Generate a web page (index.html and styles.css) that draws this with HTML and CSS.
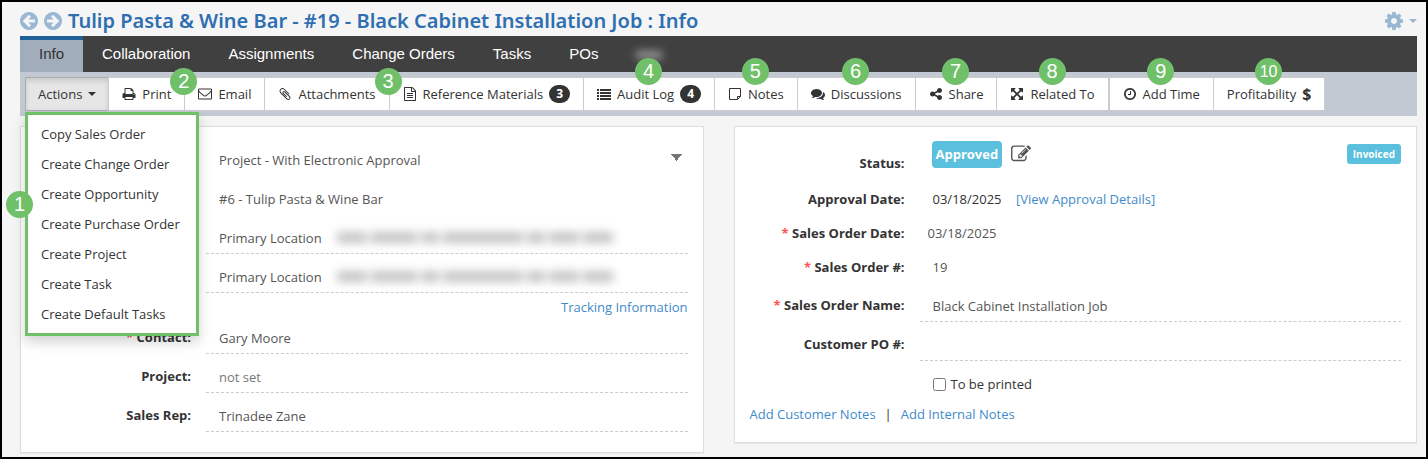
FILE: index.html
```
<!DOCTYPE html>
<html lang="en">

<head>
    <meta charset="UTF-8">
    <meta name="viewport" content="width=device-width, initial-scale=1.0">
    <title>Sales Order : Info</title>
    <link rel="stylesheet" href="styles.css">
</head>

<body>
    <header class="page-header">
        <button class="icon-btn" aria-label="Previous">
            <svg class="icon-nav" viewBox="128 128 1536 1536"><path d="M1408 960v-128q0-26-19-45t-45-19h-502l189-189q19-19 19-45t-19-45l-91-91q-18-18-45-18t-45 18l-362 362-91 91q-18 18-18 45t18 45l91 91 362 362q18 18 45 18t45-18l91-91q18-18 18-45t-18-45l-189-189h502q26 0 45-19t19-45zm256-64q0 209-103 385.5t-279.5 279.5-385.5 103-385.5-103-279.5-279.5-103-385.5 103-385.5 279.5-279.5 385.5-103 385.5 103 279.5 279.5 103 385.5z"/></svg>
        </button>
        <button class="icon-btn" aria-label="Next">
            <svg class="icon-nav flip" viewBox="128 128 1536 1536"><path d="M1408 960v-128q0-26-19-45t-45-19h-502l189-189q19-19 19-45t-19-45l-91-91q-18-18-45-18t-45 18l-362 362-91 91q-18 18-18 45t18 45l91 91 362 362q18 18 45 18t45-18l91-91q18-18 18-45t-18-45l-189-189h502q26 0 45-19t19-45zm256-64q0 209-103 385.5t-279.5 279.5-385.5 103-385.5-103-279.5-279.5-103-385.5 103-385.5 279.5-279.5 385.5-103 385.5 103 279.5 279.5 103 385.5z"/></svg>
        </button>
        <h1>Tulip Pasta &amp; Wine Bar - #19 - Black Cabinet Installation Job : Info</h1>
        <button class="icon-btn settings" aria-label="Settings">
            <svg class="icon-nav" viewBox="128 128 1536 1536"><path d="M1152 896q0-106-75-181t-181-75-181 75-75 181 75 181 181 75 181-75 75-181zm512-109v222q0 12-8 23t-20 13l-185 28q-19 54-39 91 35 50 107 138 10 12 10 25t-9 23q-27 37-99 108t-94 71q-12 0-26-9l-138-108q-44 23-91 38-16 136-29 186-7 28-36 28h-222q-14 0-24.5-8.5t-11.5-21.5l-28-184q-49-16-90-37l-141 107q-10 9-25 9-14 0-25-11-126-114-165-168-7-10-7-23 0-12 8-23 15-21 51-66.5t54-70.5q-27-50-41-99l-183-27q-13-2-21-12.5t-8-23.5v-222q0-12 8-23t19-13l186-28q14-46 39-92-40-57-107-138-10-12-10-24 0-10 9-23 26-36 98.5-107.5t94.5-71.5q13 0 26 10l138 107q44-23 91-38 16-136 29-186 7-28 36-28h222q14 0 24.5 8.5t11.5 21.5l28 184q49 16 90 37l142-107q9-9 24-9 13 0 25 10 129 119 165 170 7 8 7 22 0 12-8 23-15 21-51 66.5t-54 70.5q26 50 41 98l183 28q13 2 21 12.5t8 23.5z"/></svg>
            <span class="caret"></span>
        </button>
    </header>

    <nav class="tabs">
        <a href="#" class="active">Info</a>
        <a href="#">Collaboration</a>
        <a href="#">Assignments</a>
        <a href="#">Change Orders</a>
        <a href="#">Tasks</a>
        <a href="#">POs</a>
        <a href="#" aria-label="More"><span class="tab-blur"></span></a>
    </nav>

    <div class="toolbar">
        <div class="tool">
            <button class="btn open">Actions <span class="caret"></span></button>
            <div class="menu">
                <a href="#">Copy Sales Order</a>
                <a href="#">Create Change Order</a>
                <a href="#">Create Opportunity</a>
                <a href="#">Create Purchase Order</a>
                <a href="#">Create Project</a>
                <a href="#">Create Task</a>
                <a href="#">Create Default Tasks</a>
                <span class="marker marker-side">1</span>
            </div>
        </div>
        <div class="tool">
            <button class="btn">
                <svg class="icon" viewBox="0 0 1792 1792"><path d="M448 1536h896v-256h-896v256zm0-640h896v-384h-160q-40 0-68-28t-28-68v-160h-640v640zm1152 64q0-26-19-45t-45-19-45 19-19 45 19 45 45 19 45-19 19-45zm128 0v416q0 13-9.500 22.500t-22.500 9.500h-224v160q0 40-28 68t-68 28h-960q-40 0-68-28t-28-68v-160h-224q-13 0-22.500-9.500t-9.500-22.500v-416q0-79 56.500-135.500t135.500-56.500h64v-544q0-40 28-68t68-28h672q40 0 88 20t76 48l152 152q28 28 48 76t20 88v256h64q79 0 135.500 56.500t56.500 135.500z"/></svg>
                Print
            </button>
            <span class="marker marker-edge">2</span>
        </div>
        <div class="tool">
            <button class="btn">
                <svg class="icon" viewBox="0 64 1792 1792"><path d="M1664 1504v-768q-32 36-69 66-268 206-426 338-51 43-83 67t-86.500 48.500-102.500 24.500h-2q-48 0-102.500-24.500t-86.500-48.500-83-67q-158-132-426-338-37-30-69-66v768q0 13 9.500 22.500t22.500 9.500h1472q13 0 22.500-9.500t9.500-22.500zm0-1051v-24.500l-.5-13-3-12.500-5.500-9-9-7.500-14-2.500h-1472q-13 0-22.500 9.500t-9.500 22.500q0 168 147 284 193 152 401 317 6 5 35 29.500t46 37.500 44.500 31.500 50.500 27.500 43 9h2q20 0 43-9t50.500-27.500 44.500-31.500 46-37.500 35-29.500q208-165 401-317 54-43 100.500-115.500t46.500-131.500zm128-37v1088q0 66-47 113t-113 47h-1472q-66 0-113-47t-47-113v-1088q0-66 47-113t113-47h1472q66 0 113 47t47 113z"/></svg>
                Email
            </button>
        </div>
        <div class="tool">
            <button class="btn">
                <svg class="icon" viewBox="0 0 1792 1792"><path d="M1596 1385q0 117-79 196t-196 79q-135 0-235-100l-777-776q-113-115-113-271 0-159 110-270t269-111q158 0 273 113l605 606q10 10 10 22 0 16-30.500 46.500t-46.500 30.500q-13 0-23-10l-606-607q-79-77-181-77-106 0-179 75t-73 181q0 105 76 181l776 777q63 63 145 63 64 0 106-42t42-106q0-82-63-145l-581-581q-26-24-60-24-29 0-48 19t-19 48q0 32 25 59l410 410q10 10 10 22 0 16-31 47t-47 31q-12 0-22-10l-410-410q-63-61-63-149 0-82 57-139t139-57q88 0 149 63l581 581q100 98 100 235z"/></svg>
                Attachments
            </button>
            <span class="marker marker-edge">3</span>
        </div>
        <div class="tool">
            <button class="btn">
                <svg class="icon" viewBox="0 0 1792 1792"><path d="M1596 380q28 28 48 76t20 88v1152q0 40-28 68t-68 28h-1344q-40 0-68-28t-28-68v-1600q0-40 28-68t68-28h896q40 0 88 20t76 48zm-444-244v376h376q-10-29-22-41l-313-313q-12-12-41-22zm384 1528v-1024h-416q-40 0-68-28t-28-68v-416h-768v1536h1280zm-1024-864q0-14 9-23t23-9h704q14 0 23 9t9 23v64q0 14-9 23t-23 9h-704q-14 0-23-9t-9-23v-64zm736 224q14 0 23 9t9 23v64q0 14-9 23t-23 9h-704q-14 0-23-9t-9-23v-64q0-14 9-23t23-9h704zm0 256q14 0 23 9t9 23v64q0 14-9 23t-23 9h-704q-14 0-23-9t-9-23v-64q0-14 9-23t23-9h704z"/></svg>
                Reference Materials <span class="count">3</span>
            </button>
        </div>
        <div class="tool">
            <button class="btn">
                <svg class="icon" viewBox="0 0 14 14"><path d="M0 2h2v2H0zM3 2h11v2H3zM0 5h2v2H0zM3 5h11v2H3zM0 8h2v2H0zM3 8h11v2H3zM0 11h2v2H0zM3 11h11v2H3z"/></svg>
                Audit Log <span class="count">4</span>
            </button>
            <span class="marker">4</span>
        </div>
        <div class="tool">
            <button class="btn">
                <svg class="icon" viewBox="0 0 14 14"><path fill="none" stroke="currentColor" d="M1.500 1.500h11v8l-3 3h-8zM12.500 9.500h-3v3"/></svg>
                Notes
            </button>
            <span class="marker">5</span>
        </div>
        <div class="tool">
            <button class="btn">
                <svg class="icon" viewBox="0 0 1792 1792"><path d="M1408 768q0 139-94 257t-256.500 186.500-353.500 68.500q-86 0-176-16-124 88-278 128-36 9-86 16h-3q-11 0-20.500-8t-11.500-21q-1-3-1-6.500t.5-6.500 2-6l2.500-5 3.500-5.500 4-5 4.500-5 4-4.500q5-6 23-25t26-29.500 22.500-29 25-38.500 20.500-44q-124-72-195-177t-71-224q0-139 94-257t256.500-186.500 353.500-68.500 353.500 68.500 256.500 186.500 94 257zm384 256q0 120-71 224.500t-195 176.500q10 24 20.500 44t25 38.500 22.500 29 26 29.500 23 25q1 1 4 4.500t4.500 5 4 5 3.500 5.500l2.500 5 2 6 .5 6.500-1 6.500q-3 14-13 22t-22 7q-50-7-86-16-154-40-278-128-90 16-176 16-271 0-472-132 58 4 88 4 161 0 309-45t264-129q125-92 192-212t67-254q0-77-23-152 129 71 204 178t75 230z"/></svg>
                Discussions
            </button>
            <span class="marker">6</span>
        </div>
        <div class="tool">
            <button class="btn">
                <svg class="icon" viewBox="0 0 1792 1792"><path d="M1344 1024q133 0 226.500 93.500t93.500 226.500-93.500 226.500-226.500 93.500-226.500-93.500-93.500-226.500q0-12 2-34l-360-180q-92 86-218 86-133 0-226.500-93.500t-93.500-226.500 93.500-226.500 226.500-93.500q126 0 218 86l360-180q-2-22-2-34 0-133 93.500-226.500t226.500-93.500 226.500 93.500 93.500 226.500-93.500 226.500-226.500 93.500q-126 0-218-86l-360 180q2 22 2 34t-2 34l360 180q92-86 218-86z"/></svg>
                Share
            </button>
            <span class="marker">7</span>
        </div>
        <div class="tool">
            <button class="btn">
                <svg class="icon" viewBox="0 0 1792 1792"><path d="M1411 541l-355 355 355 355 144-144q29-31 70-14 39 17 39 59v448q0 26-19 45t-45 19h-448q-42 0-59-40-17-39 14-69l144-144-355-355-355 355 144 144q31 30 14 69-17 40-59 40h-448q-26 0-45-19t-19-45v-448q0-42 40-59 39-17 69 14l144 144 355-355-355-355-144 144q-19 19-45 19-12 0-24-5-40-17-40-59v-448q0-26 19-45t45-19h448q42 0 59 40 17 39-14 69l-144 144 355 355 355-355-144-144q-31-30-14-69 17-40 59-40h448q26 0 45 19t19 45v448q0 42-39 59-13 5-25 5-26 0-45-19z"/></svg>
                Related To
            </button>
            <span class="marker">8</span>
        </div>
        <div class="tool split">
            <button class="btn">
                <svg class="icon" viewBox="0 0 1792 1792"><path d="M1024 544v448q0 14-9 23t-23 9h-320q-14 0-23-9t-9-23v-64q0-14 9-23t23-9h224v-352q0-14 9-23t23-9h64q14 0 23 9t9 23zm416 352q0-148-73-273t-198-198-273-73-273 73-198 198-73 273 73 273 198 198 273 73 273-73 198-198 73-273zm224 0q0 209-103 385.500t-279.500 279.500-385.500 103-385.500-103-279.500-279.500-103-385.500 103-385.500 279.500-279.500 385.500-103 385.500 103 279.500 279.500 103 385.500z"/></svg>
                Add Time
            </button>
            <span class="marker">9</span>
        </div>
        <div class="tool">
            <button class="btn">Profitability <b>$</b></button>
            <span class="marker marker-small">10</span>
        </div>
    </div>

    <main class="panels">
        <section class="panel">
            <div class="row">
                <select class="value" aria-label="Sales order type">
                    <option>Project - With Electronic Approval</option>
                </select>
            </div>
            <div class="row">
                <div class="value">#6 - Tulip Pasta &amp; Wine Bar</div>
            </div>
            <div class="row">
                <div class="value underline">Primary Location <span class="redacted"><i class="w2"></i><i class="w3"></i><i class="w1"></i><i class="w4"></i><i class="w1"></i><i class="w2"></i><i class="w2"></i></span></div>
            </div>
            <div class="row">
                <div class="value underline">Primary Location <span class="redacted"><i class="w2"></i><i class="w3"></i><i class="w1"></i><i class="w4"></i><i class="w1"></i><i class="w2"></i><i class="w2"></i></span></div>
            </div>
            <div class="tracking"><a href="#">Tracking Information</a></div>
            <div class="row">
                <label for="contact"><span class="req">*</span> Contact:</label>
                <input class="value underline" type="text" id="contact" value="Gary Moore">
            </div>
            <div class="row">
                <label for="project">Project:</label>
                <input class="value underline" type="text" id="project" placeholder="not set">
            </div>
            <div class="row">
                <label for="rep">Sales Rep:</label>
                <input class="value underline" type="text" id="rep" value="Trinadee Zane">
            </div>
        </section>

        <section class="panel order">
            <div class="row status-row">
                <span class="label">Status:</span>
                <div class="value">
                    <span class="badge">Approved</span>
                    <button class="icon-btn" aria-label="Edit status">
                        <svg class="icon-edit" viewBox="0 0 1792 1792"><path d="M888 1184l116-116-152-152-116 116v56h96v96h56zm440-720q-16-16-33 1l-350 350q-17 17-1 33t33-1l350-350q17-17 1-33zm80 594v190q0 119-84.500 203.500t-203.500 84.500h-832q-119 0-203.500-84.500t-84.500-203.500v-832q0-119 84.500-203.500t203.500-84.500h832q63 0 117 25 15 7 18 23 3 17-9 29l-49 49q-14 14-32 8-23-6-45-6h-832q-66 0-113 47t-47 113v832q0 66 47 113t113 47h832q66 0 113-47t47-113v-126q0-13 9-22l64-64q15-15 35-7t20 29zm-96-738l288 288-672 672h-288v-288zm444 132l-92 92-288-288 92-92q28-28 68-28t68 28l152 152q28 28 28 68t-28 68z"/></svg>
                    </button>
                    <span class="badge badge-small">Invoiced</span>
                </div>
            </div>
            <div class="row short">
                <span class="label">Approval Date:</span>
                <div class="value dark">03/18/2025 <a href="#">[View Approval Details]</a></div>
            </div>
            <div class="row short">
                <label for="date"><span class="req">*</span> Sales Order Date:</label>
                <input class="value date" type="text" id="date" value="03/18/2025">
            </div>
            <div class="row short">
                <label for="number"><span class="req">*</span> Sales Order #:</label>
                <input class="value" type="text" id="number" value="19">
            </div>
            <div class="row">
                <label for="name"><span class="req">*</span> Sales Order Name:</label>
                <input class="value underline" type="text" id="name" value="Black Cabinet Installation Job">
            </div>
            <div class="row">
                <label for="po">Customer PO #:</label>
                <input class="value underline" type="text" id="po">
            </div>
            <div class="row">
                <div class="value dark check">
                    <input type="checkbox" id="printed">
                    <label for="printed">To be printed</label>
                </div>
            </div>
            <div class="notes"><a href="#">Add Customer Notes</a><span>|</span><a href="#">Add Internal Notes</a></div>
        </section>
    </main>
</body>

</html>
```

FILE: styles.css
```
* {
    box-sizing: border-box;
}

body {
    margin: 0;
    min-height: 100vh;
    padding: 0 9px 0 18px;
    border: 2px solid #000;
    background-color: #f5f5f5;
    color: #333;
    font-family: "Open Sans", "Noto Sans", sans-serif;
    font-size: 13px;
    line-height: 20px;
}

a {
    color: #428bca;
    text-decoration: none;
}

button,
input,
select {
    margin: 0;
    font: inherit;
    color: inherit;
}

svg {
    fill: currentColor;
}

/* header */
.page-header {
    display: flex;
    align-items: center;
    gap: 6px;
    height: 34px;
    padding-top: 3px;
}

.page-header h1 {
    margin: 0;
    font-family: "Noto Sans", "Open Sans", sans-serif;
    font-size: 20px;
    font-weight: 600;
    line-height: 28px;
    color: #2f6fb1;
}

.icon-btn {
    display: flex;
    align-items: center;
    gap: 6px;
    padding: 0;
    border: 0;
    background: none;
}

.page-header .icon-btn {
    color: #9ab8d3;
}

.icon-nav {
    width: 18px;
    height: 18px;
}

.flip {
    transform: scaleX(-1);
}

.settings {
    margin-left: auto;
}

.caret {
    display: inline-block;
    border-top: 4px solid currentColor;
    border-left: 4px solid transparent;
    border-right: 4px solid transparent;
}

/* tabs */
.tabs {
    display: flex;
    height: 36px;
    background-color: #404040;
    font-family: "Liberation Sans", Arial, sans-serif;
    font-size: 15px;
    line-height: 28px;
}

.tabs a {
    padding: 0 19px 4px;
    border-top: 4px solid transparent;
    color: #fff;
}

.tabs .active {
    border-top-color: #215f99;
    background-color: #a2adbb;
    color: #333;
}

.tab-blur {
    display: inline-block;
    width: 26px;
    height: 8px;
    background-color: #999;
    filter: blur(4px);
}

/* toolbar */
.toolbar {
    display: flex;
    height: 44px;
    padding: 5px;
    background-color: #c2c9d3;
}

.tool {
    position: relative;
}

.tool + .tool {
    margin-left: -1px;
}

.tool + .split {
    margin-left: 0;
}

.btn {
    display: flex;
    align-items: center;
    gap: 6px;
    height: 34px;
    padding: 0 13px;
    border: 1px solid #ccc;
    background-color: #fff;
    white-space: nowrap;
}

.btn.open {
    padding: 0 12px;
    border-color: #adadad;
    background-color: #e6e6e6;
    box-shadow: inset 0 3px 5px rgba(0, 0, 0, 0.125);
}

.btn b {
    font-size: 16px;
}

.icon {
    width: 14px;
    height: 14px;
}

.count {
    padding: 0 7px;
    border-radius: 10px;
    background-color: #333;
    color: #fff;
    font-size: 12px;
    font-weight: 700;
    line-height: 18px;
}

.menu {
    position: absolute;
    top: 35px;
    left: 0;
    z-index: 2;
    width: 174px;
    padding: 4px 0;
    border: 3px solid #70c06a;
    background-color: #fff;
    box-shadow: 0 6px 12px rgba(0, 0, 0, 0.175);
}

.menu a {
    display: block;
    padding: 0 13px;
    color: #333;
    line-height: 30px;
    white-space: nowrap;
}

.marker {
    position: absolute;
    top: -19px;
    left: calc(50% - 14px);
    z-index: 3;
    width: 27px;
    height: 27px;
    border-radius: 50%;
    background-color: #70c06a;
    color: #fff;
    font-family: "Liberation Sans", Arial, sans-serif;
    font-size: 20px;
    line-height: 27px;
    text-align: center;
}

.marker-edge {
    top: -9px;
    left: auto;
    right: -12px;
}

.marker-side {
    top: 76px;
    left: -22px;
}

.marker-small {
    font-size: 16px;
}

/* panels */
.panels {
    display: grid;
    grid-template-columns: 1fr 1fr;
    align-items: start;
    gap: 30px;
    padding-top: 10px;
}

.panel {
    padding: 10px 15px 20px;
    border: 1px solid #ddd;
    background-color: #fff;
    box-shadow: 0 1px 1px rgba(0, 0, 0, 0.05);
}

.row {
    display: grid;
    grid-template-columns: 155px 1fr;
    column-gap: 15px;
    height: 39px;
}

.row > label,
.label {
    padding-top: 12px;
    font-weight: 700;
    text-align: right;
}

.req {
    color: #f55;
}

.value {
    grid-column: 2;
    width: 100%;
    padding: 13px 13px 5px;
    border: 0;
    border-bottom: 1px solid transparent;
    background-color: transparent;
    color: #555;
}

.underline {
    border-bottom: 1px dashed #ccc;
}

.value::placeholder {
    color: #777;
    opacity: 1;
}

.dark {
    color: #333;
}

select.value {
    appearance: none;
    background: conic-gradient(from -38deg at 50% 100%, #777 76deg, transparent 0) calc(100% - 6px) 17px / 11px 7px no-repeat;
}

.redacted {
    display: inline-flex;
    gap: 4px;
    margin-left: 12px;
    filter: blur(5px);
}

.redacted i {
    height: 11px;
    background-color: #c4c4c4;
}

.w1 {
    width: 18px;
}

.w2 {
    width: 30px;
}

.w3 {
    width: 46px;
}

.w4 {
    width: 80px;
}

.tracking {
    padding-top: 6px;
    line-height: 16px;
    text-align: right;
}

/* order panel */
.order {
    padding-top: 14px;
    padding-bottom: 18px;
}

.short {
    height: 34px;
}

.short > label,
.short > .label,
.short > .value {
    padding-top: 8px;
}

.short > .date {
    padding-left: 8px;
}

.short a {
    margin-left: 11px;
}

.status-row {
    height: 40px;
}

.status-row .value {
    display: flex;
    align-items: center;
    height: 27px;
    padding: 0 0 0 12px;
}

.badge {
    padding: 0 4px;
    border-radius: 4px;
    background-color: #5bc0de;
    color: #fff;
    font-weight: 700;
    line-height: 27px;
}

.badge-small {
    margin-left: auto;
    padding: 0 6px;
    border-radius: 3px;
    font-size: 10px;
    line-height: 20px;
}

.status-row .icon-btn {
    margin-left: 9px;
}

.icon-edit {
    width: 20px;
    height: 20px;
}

.check {
    display: flex;
    align-items: center;
    gap: 5px;
}

.check input {
    width: 13px;
    height: 13px;
}

.notes {
    padding-top: 4px;
}

.notes span {
    margin: 0 9px;
}
```
